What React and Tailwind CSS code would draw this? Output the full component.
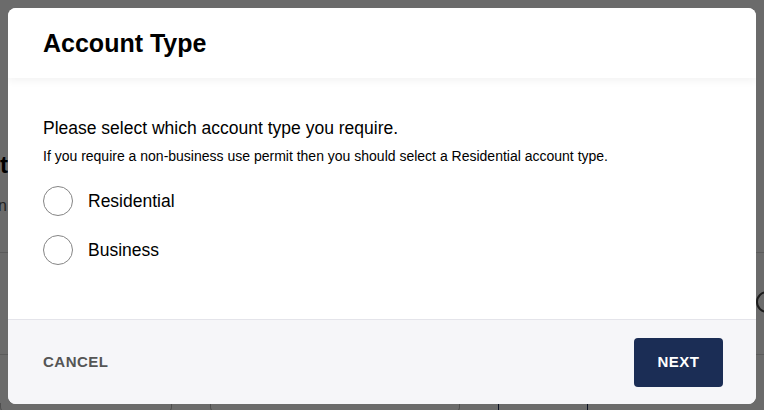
import React, { useState } from "react";

const options = ["Residential", "Business"];

const BackgroundPage = () => (
  <div className="h-[410px] w-full overflow-hidden bg-white">
    <div className="h-[150px]" />
    <div className="flex w-[8px] justify-end whitespace-nowrap text-[24px] font-bold leading-[30px] text-black">
      Account
    </div>
    <div className="mt-[16px] flex w-[7px] justify-end whitespace-nowrap text-[16px] leading-[20px] text-[#555]">
      Select an
    </div>
    <div className="mt-[36px] border-b border-[#d8d8d8]" />
    <div className="flex justify-end pt-[38px]">
      <div className="mr-[-14px] h-[22px] w-[22px] rounded-full border-2 border-[#444]" />
    </div>
    <div className="mt-[41px] border-b border-[#d8d8d8]" />
    <div className="mt-[48px] flex gap-[38px]">
      <div className="h-[10px] w-[172px] rounded-b-[6px] border border-t-0 border-[#bbb]" />
      <div className="h-[10px] w-[250px] rounded-b-[6px] border border-t-0 border-[#bbb]" />
      <div className="h-[10px] w-[90px] border-x border-[#1b2d55]" />
    </div>
  </div>
);

const App = () => {
  const [accountType, setAccountType] = useState("");

  return (
    <div
      className="relative h-[410px] w-[764px] overflow-hidden"
      style={{ fontFamily: '"Liberation Sans", Arial, sans-serif' }}
    >
      <BackgroundPage />

      {/* modal overlay */}
      <div className="absolute inset-0 bg-black/[0.58] px-2 pt-2">
        <div className="flex h-[396px] w-[748px] flex-col overflow-hidden rounded-[8px] bg-white">
          <div className="relative z-10 flex h-[70px] shrink-0 items-center bg-white px-[35px] shadow-[0_3px_8px_rgba(0,0,0,0.05)]">
            <h1 className="text-[25px] font-bold leading-[30px] text-black">Account Type</h1>
          </div>

          <div className="flex-1 px-[35px] pt-[38px]">
            <p className="text-[17.5px] leading-[24px] text-black">
              Please select which account type you require.
            </p>
            <p className="mt-[6px] text-[14px] leading-[20px] text-black">
              If you require a non-business use permit then you should select a Residential account type.
            </p>
            <div className="mt-[20px] flex flex-col gap-[19px]">
              {options.map((opt) => (
                <label key={opt} className="flex cursor-pointer items-center gap-[15px]">
                  <span
                    className="flex h-[30px] w-[30px] items-center justify-center rounded-full border-[1.5px] border-[#858585] bg-white"
                    onClick={() => setAccountType(opt)}
                  >
                    {accountType === opt && <span className="h-[16px] w-[16px] rounded-full bg-[#1b2d55]" />}
                  </span>
                  <span
                    className="text-[17.5px] leading-[24px] text-black"
                    onClick={() => setAccountType(opt)}
                  >
                    {opt}
                  </span>
                </label>
              ))}
            </div>
          </div>

          <div className="flex h-[85px] shrink-0 items-center justify-between border-t border-[#e4e4ea] bg-[#f6f6f9] pl-[35px] pr-[33px]">
            <button className="text-[15px] font-bold tracking-[0.5px] text-[#555]">CANCEL</button>
            <button className="h-[49px] w-[89px] rounded-[4px] bg-[#1b2d55] text-[15px] font-bold tracking-[0.5px] text-white">
              NEXT
            </button>
          </div>
        </div>
      </div>
    </div>
  );
};

export default App;
